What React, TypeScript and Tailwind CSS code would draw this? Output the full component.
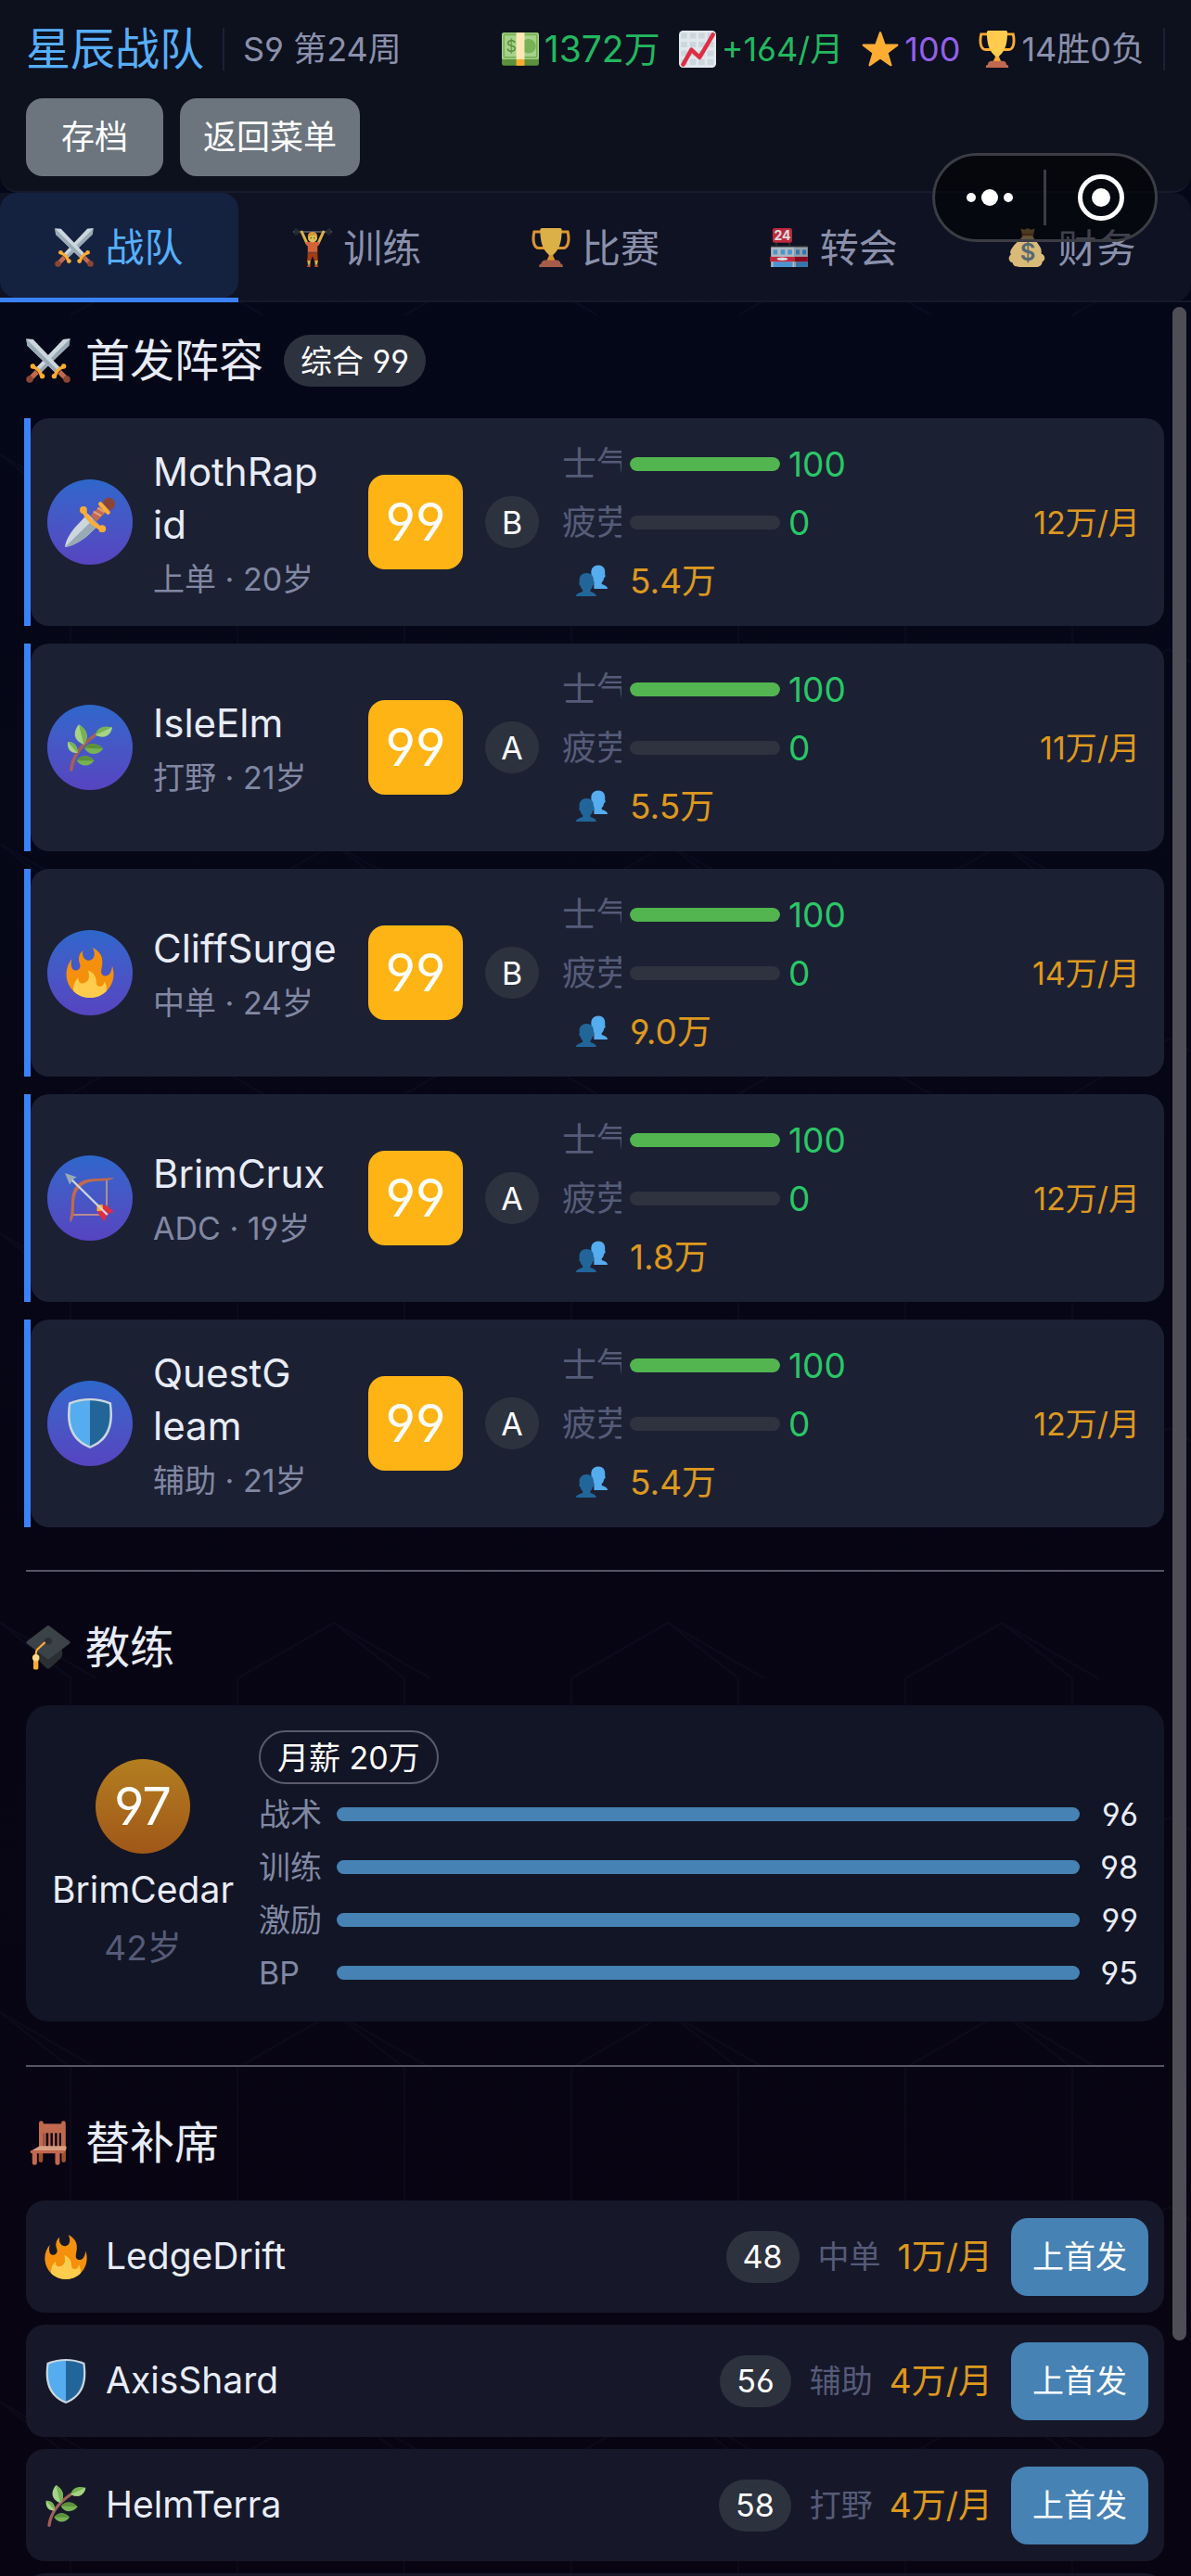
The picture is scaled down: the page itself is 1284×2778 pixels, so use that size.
import type { ReactNode } from "react";

type IconProps = { className?: string };

function Svg({ className = "", children }: IconProps & { children: ReactNode }) {
  return (
    <svg viewBox="0 0 36 36" className={`shrink-0 ${className}`} aria-hidden="true">
      {children}
    </svg>
  );
}

function Swords({ className }: IconProps) {
  return (
    <Svg className={className}>
      <path fill="#99AAB5" d="M35.8.2l-5.6.5L8 24l4 4L35 5.9z" />
      <path fill="#CCD6DD" d="M35.8.2l-5.6.5L8 24l2 2z" />
      <path fill="#CCD6DD" d="M.2.2l5.6.5L28 24l-4 4L1 5.9z" />
      <path fill="#99AAB5" d="M.2.2L1 5.9 24 28l2-2z" />
      <path stroke="#C1694F" strokeWidth="4" d="M27 27l5 5M9 27l-5 5" />
      <path stroke="#FFAC33" strokeWidth="2.6" strokeLinecap="round" d="M23.5 30.5c.5-3 3-6 6.500-7.500M12.500 30.500c-.5-3-3-6-6.500-7.500" fill="none" />
      <circle cx="33" cy="33" r="2.8" fill="#8A4633" />
      <circle cx="3" cy="33" r="2.8" fill="#8A4633" />
      <g fill="#FFAC33">
        <circle cx="22.8" cy="30.5" r="2" />
        <circle cx="30.5" cy="22.5" r="2" />
        <circle cx="13.2" cy="30.5" r="2" />
        <circle cx="5.5" cy="22.5" r="2" />
      </g>
    </Svg>
  );
}

function Dagger({ className }: IconProps) {
  return (
    <Svg className={className}>
      <path fill="#CCD6DD" d="M0 36c.5-5 4-10.500 8-15L16.500 12l8 8-9 8.500C11 32 5 35.500 0 36z" />
      <path fill="#99AAB5" d="M0 36L20.500 16l4 4-9 8.500C11 32 5 35.500 0 36z" />
      <path stroke="#C1694F" strokeWidth="6" d="M20.500 15.500L29 7" />
      <path stroke="#D99E82" strokeWidth="1.5" d="M20.500 10.500l5.500 3M23.500 7.800l5 3" />
      <path stroke="#FFAC33" strokeWidth="3" strokeLinecap="round" d="M13.500 9.500c1.500 5 8 11.500 13 13M25.500 5l5.500 6" fill="none" />
      <circle cx="13.3" cy="9.3" r="2.6" fill="#FFAC33" />
      <circle cx="26.8" cy="22.8" r="2.6" fill="#FFAC33" />
      <path fill="#8A4633" d="M27.500 4.500C28 .5 32-.5 34.500 1.500s2 7-2.500 8z" />
    </Svg>
  );
}

function Herb({ className }: IconProps) {
  return (
    <Svg className={className}>
      <path fill="none" stroke="#A0605A" strokeWidth="2.5" strokeLinecap="round" d="M4.500 34C5.500 25 12 16 22 9" />
      <path fill="#A6D388" d="M10 1.500C5.500 7 6 13 13.500 16c4.500-6 2-11-3.500-14.500z" />
      <path fill="#77B255" d="M10 1.500l3.500 14.500c4.500-6 2-11-3.500-14.500z" />
      <path fill="#77B255" d="M22 9c1-5.500 6-7 12-5.500C33 9 28.500 12.500 22 9z" />
      <path fill="#A6D388" d="M22 9l12-5.500C33 9 28.500 12.500 22 9z" />
      <path fill="#A6D388" d="M2 14c4.500 0 7.500 3 7 8-5 .5-7.500-3-7-8z" />
      <path fill="#77B255" d="M2 14c4.500 0 7.500 3 7 8z" />
      <path fill="#77B255" d="M14 18.500c4-5 10-3.500 13.500.5-4 5-10.500 5-13.500-.5z" />
      <path fill="#5C913B" d="M14 18.500c4-5 10-3.500 13.500.5z" />
      <path fill="#77B255" d="M8.500 27.500c3-4.500 9-4.500 12.500 0-3 4.500-9.500 5-12.500 0z" />
      <path fill="#5C913B" d="M8.500 27.500c3-4.500 9-4.500 12.500 0z" />
    </Svg>
  );
}

function Fire({ className }: IconProps) {
  return (
    <Svg className={className}>
      <path fill="#F4900C" d="M35 19c0-2.062-.367-4.039-1.040-5.868-.46 5.389-3.333 8.157-6.335 6.868-2.812-1.208-.917-5.917-.777-8.164.236-3.809-.012-8.169-6.931-11.794 2.875 5.500.333 8.917-2.333 9.125-2.958.231-5.667-2.542-4.667-7.042-3.238 2.386-3.332 6.402-2.333 9 1.042 2.708-.042 4.958-2.583 5.208-2.840.28-4.418-3.041-2.963-8.333C2.520 10.965 1 14.805 1 19c0 9.389 7.611 17 17 17s17-7.611 17-17z" />
      <path fill="#FFCC4D" d="M28.394 23.999c.148 3.084-2.561 4.293-4.019 3.709-2.106-.843-1.541-2.291-2.083-5.291s-2.625-5.083-5.708-6c2.250 6.333-1.247 8.667-3.080 9.084-1.872.426-3.753-.001-3.968-4.007C7.352 23.668 6 26.676 6 30c0 .368.023.73.055 1.090C9.125 34.124 13.342 36 18 36s8.875-1.876 11.945-4.910c.032-.36.055-.722.055-1.090 0-2.187-.584-4.236-1.606-6.001z" />
    </Svg>
  );
}

function Bow({ className }: IconProps) {
  return (
    <Svg className={className}>
      <path fill="none" stroke="#D99E82" strokeWidth="1" d="M30 4v26M30 5v25H5" />
      <path fill="#C1694F" d="M35.500 3.500C32 6 27 5.500 21 6 12 6.800 7.500 12 6.800 20c-.6 6 .7 11-2.800 15.500-.8-1.500-.5-3 0-5C5 26 4 20 5.500 14.500 8 7 13 4.500 20 4.200c6-.2 11-1 15.500-.7z" />
      <path stroke="#DD2E44" strokeWidth="6" d="M25.500 25.500l5 5" />
      <path fill="#DD2E44" d="M24 24l5.500-1 6 5-5.500 1.500-1.500 5.500-4.500-5.500z" />
      <path fill="#FFAC33" d="M23 23l4-.5.5 4.500-4.500.5z" />
      <path stroke="#CCD6DD" strokeWidth="1.6" d="M4 4l26.500 26" />
      <path fill="#99AAB5" d="M0 0l8.500 3-3.200 1.800L3.500 8.500z" />
    </Svg>
  );
}

function Shield({ className }: IconProps) {
  return (
    <Svg className={className}>
      <path fill="#CCD6DD" d="M18 0c5 0 10 .8 15.300 3C35.500 18 33 30 18 36 3 30 .5 18 2.700 3 8 .8 13 0 18 0z" />
      <path fill="#55ACEE" d="M18 1.500c-5 0-9 .8-13.800 2.600C2.500 17 4.500 28.500 18 34.300z" />
      <path fill="#269" d="M18 1.500c5 0 9 .8 13.800 2.600C33.500 17 31.500 28.500 18 34.300z" />
    </Svg>
  );
}

function People({ className }: IconProps) {
  return (
    <Svg className={className}>
      <path fill="#55ACEE" d="M36 27.500c0-3-3-4-6-5-1-.5-1-2 0-3 1.500-1.500 1.500-3 2-4.500 1.500-.5 2-3 1-4 .8-6-1.500-10.500-7.500-10.500S16.500 5 17.500 11c-1 1-.5 3.500 1 4 .5 1.500.5 3 2 4.500v8z" />
      <path fill="#269" d="M23 36c0-3-3-4-6-5-1-.5-1-2 0-3 1.500-1.500 1.500-2.500 2-4 1.500-.5 2-3 1-4C20.800 14 18 9.500 12 9.500S3 14 4 20c-1 1-.5 3.500 1 4 .5 1.500.5 2.500 2 4 1 1 1 2.500 0 3-3 1-7 2-7 5z" />
    </Svg>
  );
}

function Cash({ className }: IconProps) {
  return (
    <Svg className={className}>
      <rect x="0" y="2" width="36" height="32" rx="2" fill="#5C913B" />
      <rect x="0" y="2" width="36" height="26" rx="2" fill="#A7D28B" />
      <rect x="2" y="4" width="32" height="22" rx="1" fill="none" stroke="#77B255" strokeWidth="1.5" />
      <circle cx="26" cy="15" r="7" fill="#77B255" />
      <text x="4" y="21" fontSize="16" fontFamily="Inter, sans-serif" fill="#5C913B">$</text>
      <path fill="#FFE8B6" d="M14 2h8v26h-8z" />
      <path fill="#FFAC33" d="M14 28h8v6h-8z" />
    </Svg>
  );
}

function Chart({ className }: IconProps) {
  return (
    <Svg className={className}>
      <rect width="36" height="36" rx="4" fill="#E1E8ED" />
      <path stroke="#CCD6DD" strokeWidth="5.5" strokeDasharray="6 2.500" d="M2 5h32M2 13.500h32M2 22h32M2 30.500h32" />
      <path fill="none" stroke="#DD2E44" strokeWidth="4" strokeLinecap="round" strokeLinejoin="round" d="M4 33l8-14.500 8 7.500L33 4" />
    </Svg>
  );
}

function Star({ className }: IconProps) {
  return (
    <Svg className={className}>
      <path fill="#FFAC33" stroke="#FFAC33" strokeWidth="2" strokeLinejoin="round" d="M18 2l4.200 11.800 12.300.3-9.800 7.400 3.600 12L18 26.500 7.700 33.500l3.600-12-9.800-7.400 12.300-.3z" />
    </Svg>
  );
}

function Trophy({ className }: IconProps) {
  return (
    <Svg className={className}>
      <path fill="none" stroke="#FFAC33" strokeWidth="2.6" d="M10 3.500H2.500C1 10 1.500 18.500 7 18.500h5M26 3.500h7.500C35 10 34.500 18.500 29 18.500h-5" />
      <path fill="#FFAC33" d="M16 20h4v6l2.500 5h-9l2.500-5z" />
      <path fill="#FFCC4D" d="M8 1.500C8 .5 9 0 10 0h16c1 0 2 .5 2 1.500 0 10-2 16.500-5.500 20.500-1.500 2-3 3-4.500 3s-3-1-4.500-3C10 18 8 11.500 8 1.500z" />
      <path fill="#C1694F" d="M7 36c0-2 .5-3 2-3 0-2 1.500-3.500 4-3.500h10c2.500 0 4 1.500 4 3.500 1.500 0 2 1 2 3z" />
    </Svg>
  );
}

function Lifter({ className }: IconProps) {
  return (
    <Svg className={className}>
      <path stroke="#99AAB5" strokeWidth=".9" d="M0 3.500h36" />
      <path fill="#292F33" d="M1 .5h3v6H1zM4 1.500h1.500v4H4zM32 .5h3v6h-3zM30.500 1.500H32v4h-1.500z" />
      <path fill="none" stroke="#FFCC4D" strokeWidth="2.6" strokeLinecap="round" d="M8 3.500l5 11M28 3.500l-5 11" />
      <path fill="#F4713F" d="M11 13.500c2-1 12-1 14 0L22.500 17v6h-9v-6z" />
      <path fill="#C1440E" d="M13.500 23h9l.5 8h-3l-2-5-2 5h-3z" />
      <path fill="#854836" d="M13.500 22h9v1.500h-9z" />
      <path fill="#FFCC4D" d="M13.200 30h2.800l-.3 4h-2zM23 30h-3l.3 4h2z" />
      <path fill="#DD5A20" d="M13.200 34h2.800v2h-3zM20 34h2.800l.2 2h-3z" />
      <circle cx="18" cy="9" r="4.3" fill="#FFDC5D" />
      <path fill="#FFAC33" d="M13.500 8c0-6 9-6 9 0l-2-1.500-4 .5z" />
      <path fill="#664500" d="M16 8.500h1v1.200h-1zM19 8.500h1v1.200h-1z" />
    </Svg>
  );
}

function Store({ className }: IconProps) {
  return (
    <Svg className={className}>
      <path fill="#292F33" d="M1 16h34v3H1zM5 13h2v4H5zM17 13h2v4h-2z" />
      <path fill="#CCD6DD" d="M1 17.500h22V36H1z" />
      <path fill="#AAB8C2" d="M23 17.500h12V36H23z" />
      <path fill="#55ACEE" d="M3 20h4v4.500H3zM10 20h4v4.500h-4zM16.500 20h4v4.500h-4zM3 31h18v5H3z" />
      <path fill="#3B88C3" d="M24 20h3.500v4.500H24zM30 20h3.500v4.500H30zM24 31h11v5H24z" />
      <path fill="#DD2E44" d="M0 26.500h23V31H0z" />
      <path fill="#A0041E" d="M23 26.500h12V31H23z" />
      <ellipse cx="11.5" cy="28.5" rx="5" ry="1.4" fill="#fff" />
      <rect x="2.5" y="0" width="18" height="13.5" rx="2" fill="#DD2E44" />
      <text x="11.5" y="11" textAnchor="middle" fontSize="12" fontWeight="700" fontFamily="Inter, sans-serif" fill="#fff">24</text>
    </Svg>
  );
}

function MoneyBag({ className }: IconProps) {
  return (
    <Svg className={className}>
      <path fill="#FDD888" d="M13.500 6.500h9c1 4 5.500 7.500 7.500 12 .7 2 .7 3.500.5 5 3.500 1 4.500 6 1 7.500-.5 3.500-3 5-6 5h-15c-3.500 0-6-1-6.500-4-4-1-4.500-5.500-1.500-7.500-1.500-2.500 0-4.500 1-6 2.500-4.500 8.500-8 10-12z" />
      <path fill="#BF9A55" d="M11.500.5L15 1.500 18 0l3 1.500L24.500.5 23 6.500H13z" />
      <path fill="#BE5A3B" d="M12.500 5h11v2h-11z" />
      <text x="18" y="30" textAnchor="middle" fontSize="22" fontWeight="600" fontFamily="Inter, sans-serif" fill="#67757F">$</text>
    </Svg>
  );
}

function Cap({ className }: IconProps) {
  return (
    <Svg className={className}>
      <path fill="#292F33" d="M9 19l18-1c3 1 3 5 1.500 8L20 34c-1.500 1.300-2.500 1.300-4 0l-7-7z" />
      <path fill="#3B4248" d="M16.500.7c1-.9 2-.9 3 0L35 12.500c1 .8 1 1.500 0 2.300L19.500 26.500c-1 .9-2 .9-3 0L1 14.800c-1-.8-1-1.500 0-2.300z" />
      <ellipse cx="18" cy="12.5" rx="3" ry="2.8" fill="#292F33" />
      <path fill="none" stroke="#FFAC33" strokeWidth="1.7" d="M15.500 13.500l-6.500 6c-1 1-1 2-1 6" />
      <path fill="#FFAC33" d="M6 27h4v7.500c0 1.500-4 1.500-4 0z" />
      <circle cx="8" cy="26" r="2.8" fill="#FFD983" />
    </Svg>
  );
}

function Chair({ className }: IconProps) {
  return (
    <Svg className={className}>
      <path stroke="#C1694F" strokeWidth="1.7" d="M15.300 9v13M19 9v13M22.500 9v13M26 9v13" />
      <path stroke="#A0522D" strokeWidth="3.4" strokeLinecap="round" d="M12 24v8M30.500 24v8" />
      <path stroke="#C1694F" strokeWidth="3.6" strokeLinecap="round" d="M12.300 2v20M30.300 2v20" />
      <path fill="#C1694F" d="M12 2.500h18V10H12z" />
      <path fill="#D99E82" d="M11 20.500h21c1 0 1 3-.5 4H4z" />
      <path fill="#C1694F" d="M4 24h27v2.500H5c-1.500 0-2-1.500-1-2.500z" />
      <path stroke="#C1694F" strokeWidth="3.8" strokeLinecap="round" d="M7 26v8M25.500 26v8" />
    </Svg>
  );
}

const stats = [
  { icon: Cash, text: "1372万", style: "text-[39px] text-[#22b860]" },
  { icon: Chart, text: "+164/月", style: "text-[36px] text-[#22b860]" },
  { icon: Star, text: "100", style: "text-[36px] text-[#9360ea]" },
  { icon: Trophy, text: "14胜0负", style: "text-[36px] text-[#8a90ac]" },
];

const tabs = [
  { icon: Swords, text: "战队" },
  { icon: Lifter, text: "训练" },
  { icon: Trophy, text: "比赛" },
  { icon: Store, text: "转会" },
  { icon: MoneyBag, text: "财务" },
];

const starters = [
  { icon: Dagger, name: ["MothRap", "id"], info: "上单 · 20岁", grade: "B", fans: "5.4万", pay: "12万/月" },
  { icon: Herb, name: ["IsleElm"], info: "打野 · 21岁", grade: "A", fans: "5.5万", pay: "11万/月" },
  { icon: Fire, name: ["CliffSurge"], info: "中单 · 24岁", grade: "B", fans: "9.0万", pay: "14万/月" },
  { icon: Bow, name: ["BrimCrux"], info: "ADC · 19岁", grade: "A", fans: "1.8万", pay: "12万/月" },
  { icon: Shield, name: ["QuestG", "leam"], info: "辅助 · 21岁", grade: "A", fans: "5.4万", pay: "12万/月" },
];

const coachSkills = [
  { label: "战术", value: 96 },
  { label: "训练", value: 98 },
  { label: "激励", value: 99 },
  { label: "BP", value: 95 },
];

const bench = [
  { icon: Fire, name: "LedgeDrift", rating: 48, role: "中单", pay: "1万/月" },
  { icon: Shield, name: "AxisShard", rating: 56, role: "辅助", pay: "4万/月" },
  { icon: Herb, name: "HelmTerra", rating: 58, role: "打野", pay: "4万/月" },
];

function SectionTitle({ icon: Icon, text, children }: { icon: (p: IconProps) => ReactNode; text: string; children?: ReactNode }) {
  return (
    <div className="mb-[34px] flex h-14 items-center">
      <Icon className="size-12" />
      <h2 className="ml-4 text-[48px] leading-none">{text}</h2>
      {children}
    </div>
  );
}

function Meter({ label, value }: { label: string; value: number }) {
  return (
    <>
      <span className="overflow-hidden whitespace-nowrap text-[#555c78]">{label}</span>
      <div className="h-[15px] overflow-hidden rounded-full bg-[#2e333f]" role="meter" aria-label={label} aria-valuenow={value}>
        <div className="h-full rounded-full bg-[#52b54f]" style={{ width: `${value}%` }} />
      </div>
      <span className="text-[#2ac766]">{value}</span>
    </>
  );
}

function StarterCard({ player }: { player: (typeof starters)[number] }) {
  const Icon = player.icon;
  return (
    <li className="flex h-56">
      <div className="w-[7px] shrink-0 bg-[#3b82f6]" />
      <div className="flex min-w-0 flex-1 items-center rounded-[20px] bg-[#1c2033] pr-[26px] pl-[18px]">
        <div className="flex size-[92px] shrink-0 items-center justify-center rounded-full bg-linear-to-b from-[#2d67cb] to-[#5644c0]">
          <Icon className="size-[54px]" />
        </div>
        <div className="ml-[22px] w-[208px] shrink-0">
          <h3 className="text-[42px] leading-[57px]">
            {player.name[0]}
            <wbr />
            {player.name[1]}
          </h3>
          <p className="mt-2 text-[34px] leading-[45px] whitespace-nowrap text-[#8188a3]">{player.info}</p>
        </div>
        <div className="ml-6 flex size-[102px] shrink-0 items-center justify-center rounded-[18px] bg-[#ffb415] text-[56px] text-white">99</div>
        <div className="ml-6 flex h-14 w-[58px] shrink-0 items-center justify-center rounded-full bg-[#2d323f] text-[34px] text-white">{player.grade}</div>
        <div className="ml-[25px] grid grid-cols-[64px_162px_auto] items-center gap-x-[9px] gap-y-3.5 text-[37px] leading-[49px]">
          <Meter label="士气" value={100} />
          <Meter label="疲劳" value={0} />
          <div className="flex justify-center">
            <People className="size-[34px]" />
          </div>
          <span className="text-[#dd981f]">{player.fans}</span>
        </div>
        <span className="ml-auto text-[34px] whitespace-nowrap text-[#dd981f]">{player.pay}</span>
      </div>
    </li>
  );
}

export default function App() {
  return (
    <div className="relative flex h-screen flex-col overflow-hidden bg-linear-to-b from-[#040819] to-[#090412] font-[Inter,'Noto_Sans_CJK_SC',sans-serif] font-normal text-[#e8ecf8] [font-feature-settings:'cv03','cv04']">
      <svg className="pointer-events-none absolute inset-0 size-full" aria-hidden="true">
        <defs>
          <pattern id="hex" width="360" height="420" patternUnits="userSpaceOnUse">
            <path
              d="M0 70L76 130V310M360 70L256 130V310M0 70L104 130M180 280L284 340M180 280L76 340"
              fill="none"
              stroke="#6a80c8"
              strokeOpacity=".04"
              strokeWidth="2"
            />
          </pattern>
        </defs>
        <rect width="100%" height="100%" fill="url(#hex)" />
      </svg>

      <header className="relative rounded-b-[20px] border-b-2 border-[#161a2c] bg-[#0d101d] px-7 pt-[23px] pb-4">
        <div className="flex h-[60px] items-center justify-between whitespace-nowrap">
          <div className="flex items-center">
            <h1 className="text-[48px] leading-none text-[#56aefc]">星辰战队</h1>
            <div className="mx-5 h-[46px] w-0.5 bg-[#1b2136]" />
            <span className="text-[36px] text-[#8a90ac]">S9 第24周</span>
          </div>
          <div className="flex items-center gap-5">
            {stats.map(({ icon: Icon, text, style }) => (
              <span key={text} className={`flex items-center gap-1.5 ${style}`}>
                <Icon className="size-10" />
                {text}
              </span>
            ))}
            <div className="h-[46px] w-0.5 bg-[#1b2136]" />
          </div>
        </div>
        <div className="mt-[23px] flex gap-[18px] text-[36px] text-white">
          <button className="h-[84px] min-w-[148px] rounded-[18px] bg-[#6c757d] px-[25px]">存档</button>
          <button className="h-[84px] min-w-[148px] rounded-[18px] bg-[#6c757d] px-[25px]">返回菜单</button>
        </div>
      </header>

      <nav className="relative grid h-[118px] shrink-0 grid-cols-5 rounded-r-[20px] bg-[#0f1222] text-[42px]">
        {tabs.map(({ icon: Icon, text }, i) => (
          <button
            key={text}
            className={
              i === 0
                ? "flex flex-col text-[#56aefc]"
                : "flex flex-col border-b-2 border-[#151929] text-[#8a90ac]"
            }
          >
            <span
              className={
                i === 0
                  ? "flex w-full flex-1 items-center justify-center gap-3 rounded-[18px] bg-[#142240] pt-1"
                  : "flex w-full flex-1 items-center justify-center gap-3 pt-0.5"
              }
            >
              <Icon className={i === 0 ? "size-[42px]" : "size-[42px] opacity-85"} />
              {text}
            </span>
            {i === 0 && <span className="h-[5px] w-full bg-[#3b82f6]" />}
          </button>
        ))}
      </nav>

      <main className="relative min-h-0 flex-1 overflow-hidden pt-[35px] pr-[29px] pl-7">
        <section>
          <SectionTitle icon={Swords} text="首发阵容">
            <span className="ml-[22px] flex h-14 items-center rounded-full bg-[#2d323f] px-[18px] text-[34px] text-white">综合 99</span>
          </SectionTitle>
          <ul className="-ml-0.5 flex flex-col gap-[19px]">
            {starters.map((p) => (
              <StarterCard key={p.name[0]} player={p} />
            ))}
          </ul>
        </section>

        <hr className="mt-[46px] mb-[54px] border-t-2 border-[#565566]" />

        <section>
          <SectionTitle icon={Cap} text="教练" />
          <div className="flex items-center rounded-3xl bg-[#121525] px-7 pt-[27px] pb-6">
            <div className="flex w-[196px] shrink-0 flex-col items-center gap-2.5">
              <div className="flex size-[102px] items-center justify-center rounded-full bg-linear-to-b from-[#b37e20] to-[#a05718] text-[56px] text-white">97</div>
              <h3 className="text-[39px] leading-[57px]">BrimCedar</h3>
              <p className="text-[37px] leading-[50px] text-[#555b78]">42岁</p>
            </div>
            <div className="ml-[27px] flex-1 text-[34px]">
              <span className="mb-1 inline-flex h-[58px] items-center rounded-full border-2 border-[#5a5a6c] px-[18px] text-white">月薪 20万</span>
              {coachSkills.map(({ label, value }) => (
                <div key={label} className="grid h-[57px] grid-cols-[84px_1fr_63px] items-center">
                  <span className="text-[#8188a3]">{label}</span>
                  <div className="h-[15px] rounded-full bg-[#4682b4]" role="meter" aria-label={label} aria-valuenow={value} />
                  <span className="text-right">{value}</span>
                </div>
              ))}
            </div>
          </div>
        </section>

        <hr className="mt-[47px] mb-[54px] border-t-2 border-[#565566]" />

        <section>
          <SectionTitle icon={Chair} text="替补席" />
          <ul className="flex flex-col gap-[13px]">
            {bench.map(({ icon: Icon, name, rating, role, pay }) => (
              <li key={name} className="flex h-[121px] items-center rounded-[20px] bg-[#161829] pr-[17px] pl-[19px] whitespace-nowrap">
                <Icon className="size-12" />
                <h3 className="ml-[19px] text-[39px]">{name}</h3>
                <span className="ml-auto flex h-14 items-center rounded-full bg-[#2d323f] px-[18px] text-[34px] text-white">{rating}</span>
                <span className="ml-5 text-[34px] text-[#555b78]">{role}</span>
                <span className="ml-[18px] text-[37px] text-[#dd981f]">{pay}</span>
                <button className="ml-5 h-[84px] rounded-[18px] bg-[#4682b4] px-[23px] text-[34px] text-white">上首发</button>
              </li>
            ))}
            <li className="h-[121px] rounded-[20px] bg-[#161829]" />
          </ul>
        </section>

        <div className="absolute top-[5px] right-[5px] bottom-[254px] w-[15px] rounded-full bg-[#4f4e57]" />
      </main>

      <div className="absolute top-[165px] right-9 flex h-24 w-[243px] items-center rounded-full border-3 border-[#3c3d44] bg-black/55">
        <button aria-label="更多" className="flex flex-1 items-center justify-center gap-1.5">
          <span className="size-2.5 rounded-full bg-white" />
          <span className="size-[18px] rounded-full bg-white" />
          <span className="size-2.5 rounded-full bg-white" />
        </button>
        <div className="h-[60px] w-[3px] bg-[#3c3d44]" />
        <button aria-label="关闭" className="flex flex-1 items-center justify-center">
          <span className="flex size-[50px] items-center justify-center rounded-full border-5 border-white">
            <span className="size-5 rounded-full bg-white" />
          </span>
        </button>
      </div>
    </div>
  );
}
